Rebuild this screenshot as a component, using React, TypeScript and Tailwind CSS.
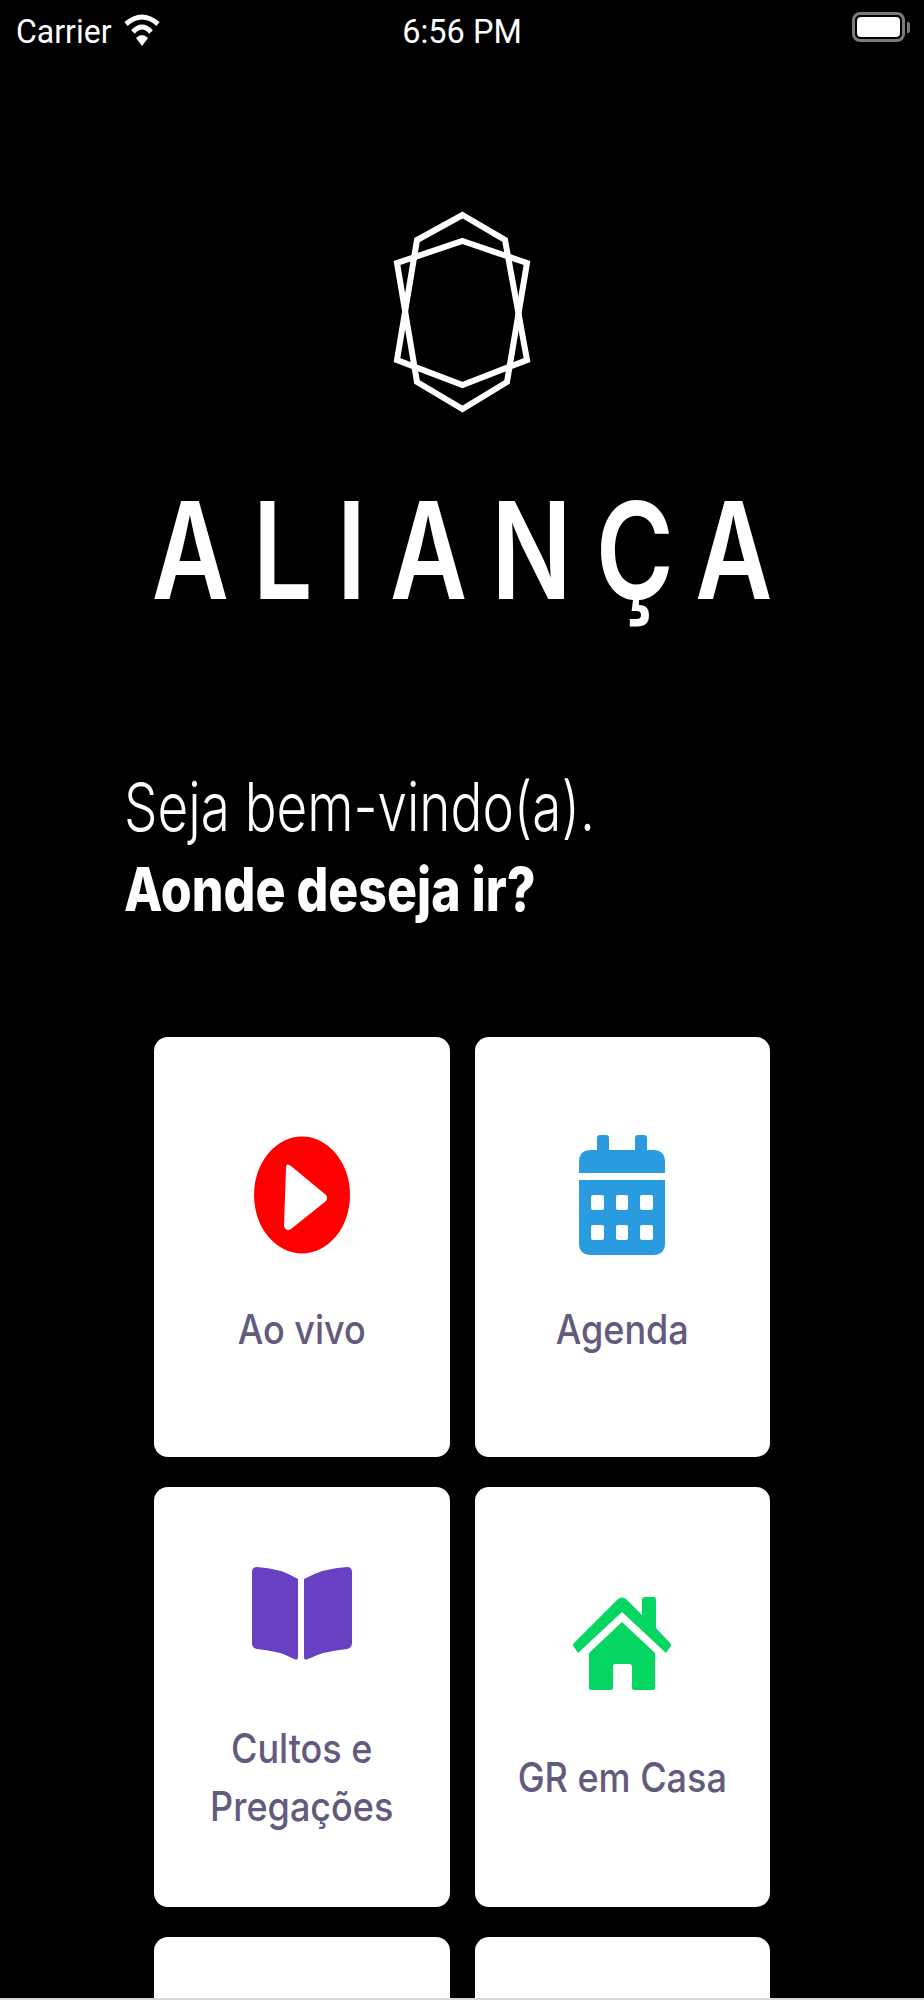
const sans = "font-['Inter','Liberation_Sans',sans-serif]";

function Logo() {
  return (
    <svg width="140" height="206" viewBox="392 208 140 206" className="block" fill="none" stroke="#fff" strokeWidth="6">
      <polygon points="462.5,215 505,240 527,360 462.5,385 397,360 417,240" />
      <polygon points="462.5,241 527,263 507,382 462.5,409 417,382 397,263" />
    </svg>
  );
}

function PlayIcon() {
  return (
    <svg width="96" height="118" viewBox="0 0 96 118" className="block">
      <ellipse cx="48" cy="59" rx="48" ry="58.5" fill="#ff0000" />
      <path d="M32 32 Q32 26 37 30 L72 59 Q74 62 72 65 L37 93 Q32 96 30 90 Z" fill="#fff" />
    </svg>
  );
}

function CalendarIcon() {
  return (
    <svg width="86" height="120" viewBox="0 0 86 120" className="block" fill="#2b9be0">
      <rect x="18" y="0" width="12" height="24" rx="3" />
      <rect x="56" y="0" width="12" height="24" rx="3" />
      <path d="M0 38 V27 Q0 15 12 15 H74 Q86 15 86 27 V38 Z" />
      <path d="M0 45 H86 V108 Q86 120 74 120 H12 Q0 120 0 108 Z" />
      <g fill="#fff">
        <rect x="12" y="60" width="13" height="15" rx="2" />
        <rect x="37" y="60" width="12" height="15" rx="2" />
        <rect x="61" y="60" width="13" height="15" rx="2" />
        <rect x="12" y="90" width="13" height="15" rx="2" />
        <rect x="37" y="90" width="12" height="15" rx="2" />
        <rect x="61" y="90" width="13" height="15" rx="2" />
      </g>
    </svg>
  );
}

function BookIcon() {
  return (
    <svg width="100" height="94" viewBox="0 0 100 94" className="block" fill="#6741c1">
      <path d="M0 5 Q0 0 5 0 Q28 1 46 12 V90 Q46 94 42 92 Q28 84 5 82 Q0 81 0 76 Z" />
      <path d="M100 5 Q100 0 95 0 Q72 1 52 12 V90 Q52 94 56 92 Q72 84 95 82 Q100 81 100 76 Z" />
    </svg>
  );
}

function HouseIcon() {
  return (
    <svg width="100" height="94" viewBox="0 0 100 94" className="block" fill="#05d661">
      <path d="M2 46 L46 2 Q50 -1 54 2 L70 18 V3 Q70 0 73 0 H82 Q84 0 84 3 V31 L98 46 Q100 48 98 50 L94 56 L50 15 L6 56 L2 50 Q0 48 2 46 Z" />
      <path d="M50 25 L83 56 V91 Q83 93 81 93 H62 Q60 93 60 91 V70 Q60 67 57 67 H43 Q41 67 41 70 V91 Q41 93 38 93 H19 Q17 93 17 91 V56 Z" />
    </svg>
  );
}

function Card({ label, icon, gap }: { label: React.ReactNode; icon: React.ReactNode; gap: string }) {
  return (
    <div className="h-[420px] rounded-[14px] bg-white flex flex-col items-center">
      <div className={gap}>{icon}</div>
      {label}
    </div>
  );
}

function Label({ children, className = 'leading-[46px]' }: { children: React.ReactNode; className?: string }) {
  return (
    <div className={`${sans} text-[36px] font-medium text-center text-[#625b7e] scale-y-[1.13] whitespace-nowrap ${className}`}>
      {children}
    </div>
  );
}

export default function App() {
  return (
    <div className={`${sans} relative h-[2000px] overflow-hidden bg-black text-white`}>
      {/* status bar */}
      <div className="relative h-[56px]">
        <div className="absolute left-[16px] top-[14px] flex items-center gap-[12px]">
          <span className="text-[32px] leading-[34px] scale-y-[1.05] origin-left font-['Roboto',sans-serif]">Carrier</span>
          <svg width="36" height="32" viewBox="0 0 36 32" fill="none" stroke="#fff" strokeWidth="5" className="mt-[-2px]">
            <path d="M2 10 Q18 -4 34 10" />
            <path d="M9 18 Q18 8 27 18" />
            <path d="M12 24 L18 32 L24 24 Q18 18 12 24 Z" fill="#fff" stroke="none" />
          </svg>
        </div>
        <div className="absolute left-0 right-0 top-[14px] text-center text-[32.5px] leading-[34px] scale-y-[1.05] font-['Roboto',sans-serif]">6:56 PM</div>
        <div className="absolute left-[852px] top-[12px] flex items-center gap-[2px]">
          <div className="h-[30px] w-[53px] rounded-[8px] border-[3px] border-[#7a7a7a] p-[2px]">
            <div className="h-full rounded-[4px] bg-white" />
          </div>
          <div className="h-[11px] w-[3px] rounded-r-[2px] bg-[#7a7a7a]" />
        </div>
      </div>

      {/* logo */}
      <div className="flex justify-center pt-[152px]">
        <Logo />
      </div>
      <div className="mt-[80px] h-[142px] flex justify-center">
        <span className="text-[106px] leading-[120px] tracking-[24px] font-semibold mr-[-24px] scale-y-[1.27] whitespace-nowrap">ALIANÇA</span>
      </div>

      {/* greeting */}
      <div className="mt-[139px] pl-[124px]">
        <div className="text-[53px] leading-[64px] font-light scale-y-[1.28] origin-left">Seja bem-vindo(a).</div>
        <div className="mt-[18px] text-[50px] leading-[64px] font-extrabold scale-y-[1.2] origin-left">Aonde deseja ir?</div>
      </div>

      {/* menu grid */}
      <div className="mt-[116px] mx-[154px] grid grid-cols-2 gap-x-[25px] gap-y-[30px]">
        <Card icon={<PlayIcon />} gap="mt-[99px] mb-[52px]" label={<Label>Ao vivo</Label>} />
        <Card icon={<CalendarIcon />} gap="mt-[98px] mb-[51px]" label={<Label>Agenda</Label>} />
        <Card
          icon={<BookIcon />}
          gap="mt-[80px] mb-[66px]"
          label={<Label className="leading-[51px]">Cultos e<br />Pregações</Label>}
        />
        <Card icon={<HouseIcon />} gap="mt-[110px] mb-[63px]" label={<Label>GR em Casa</Label>} />
        <Card icon={null} gap="" label={null} />
        <Card icon={null} gap="" label={null} />
      </div>

      {/* bottom edge */}
      <div className="absolute bottom-0 left-0 right-0 h-[2px] bg-[#d8d8d8]" />
    </div>
  );
}
